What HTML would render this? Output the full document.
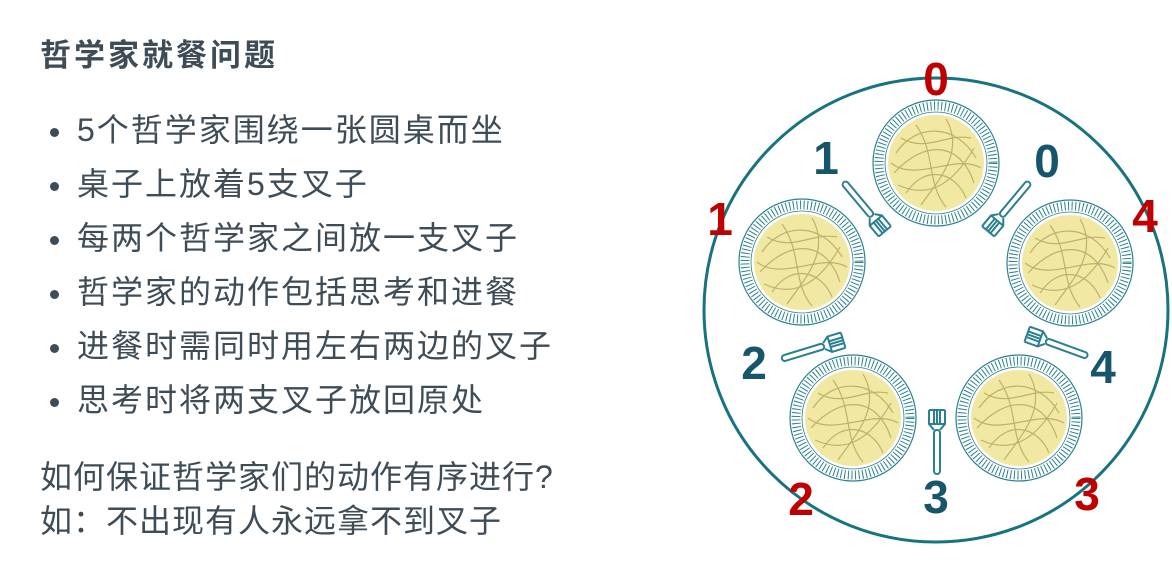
<!DOCTYPE html>
<html><head><meta charset="utf-8"><style>
body{margin:0;width:1172px;height:576px;background:#fff;overflow:hidden;position:relative;font-family:"Liberation Sans","Noto Sans CJK SC",sans-serif;color:#3e4c57}
.t{position:absolute;left:40px;top:30px;font-size:31px;font-weight:bold;letter-spacing:3px}
ul{position:absolute;left:40px;top:106px;margin:0;padding:0;list-style:none;font-size:32px;letter-spacing:2px}
li{height:54px;line-height:48px;position:relative;padding-left:37px}
li:before{content:"";position:absolute;left:10px;top:22px;width:9px;height:9px;border-radius:50%;background:#3e4c57}
.q{position:absolute;left:40px;top:455px;font-size:32px;line-height:44px;letter-spacing:1px}
</style></head><body>
<div class="t">哲学家就餐问题</div>
<ul><li>5个哲学家围绕一张圆桌而坐</li><li>桌子上放着5支叉子</li><li>每两个哲学家之间放一支叉子</li><li>哲学家的动作包括思考和进餐</li><li>进餐时需同时用左右两边的叉子</li><li>思考时将两支叉子放回原处</li></ul>
<div class="q">如何保证哲学家们的动作有序进行?<br>如：不出现有人永远拿不到叉子</div>
<svg width="1172" height="576" style="position:absolute;left:0;top:0">
<defs>
<g id="p">
<circle r="63" fill="#fff" stroke="#2a8090" stroke-width="1.2"/>
<circle r="57" fill="none" stroke="#2a8090" stroke-width="9" stroke-dasharray="1 2.6"/>
<circle r="51" fill="none" stroke="#2a8090" stroke-width="0.8"/>
<circle r="48" fill="#f1e8a4"/>
<path d="M-40,-10 C-20,-40 20,-40 40,-5 M-42,10 C-10,-25 25,-20 38,20 M-30,30 C-10,0 20,10 30,35 M-20,-38 C0,-10 -10,20 10,44 M10,-44 C30,-10 0,20 -15,42 M-45,0 C-20,20 20,-10 45,5 M-35,-25 C-10,-10 10,-30 35,-25 M-38,22 C-10,35 15,25 38,-15" fill="none" stroke="#bdb268" stroke-width="1.2"/>
</g>
<g id="f" fill="none" stroke="#2a8090" stroke-width="2">
<rect x="-3" y="0" width="6" height="44" rx="3"/>
<path d="M-3,0 L-8,-6 L-8,-20 M3,0 L8,-6 L8,-20 M-8,-20 L8,-20 M-3,-20 V-6 M0,-20 V-6 M3,-20 V-6 M-8,-6 H8" />
</g>
</defs>
<circle cx="936" cy="310" r="232" fill="none" stroke="#17737f" stroke-width="3"/>
<use href="#p" x="936" y="163"/>
<use href="#p" x="802" y="262"/>
<use href="#p" x="1070" y="263"/>
<use href="#p" x="853" y="418"/>
<use href="#p" x="1019" y="418"/>
<use href="#f" transform="translate(872,216) rotate(140)"/>
<use href="#f" transform="translate(1001,216) rotate(-140)"/>
<use href="#f" transform="translate(824,346) rotate(73)"/>
<use href="#f" transform="translate(1046,341) rotate(-70)"/>
<use href="#f" transform="translate(937,430)"/>
<g font-family="Liberation Sans,sans-serif" font-weight="bold" font-size="46" text-anchor="middle">
<g fill="#17566a"><text x="826" y="174">1</text><text x="1047" y="177">0</text><text x="754" y="379">2</text><text x="1103" y="383">4</text><text x="936" y="513">3</text></g>
<g fill="#c00000"><text x="936" y="95">0</text><text x="720" y="235">1</text><text x="1145" y="232">4</text><text x="801" y="515">2</text><text x="1087" y="510">3</text></g>
</g>
</svg>
</body></html>
